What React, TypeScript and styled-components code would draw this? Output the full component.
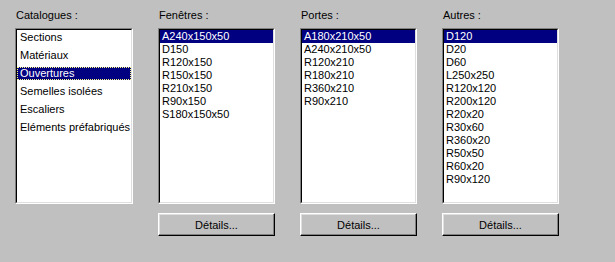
import styled, { createGlobalStyle, css } from 'styled-components';

const GlobalStyle = createGlobalStyle`
  html, body {
    margin: 0;
    padding: 0;
    background: #c0c0c0;
  }
  body {
    font-family: "Liberation Sans", Arial, sans-serif;
    font-size: 11px;
    color: #000;
  }
`;

interface Catalogue {
  title: string;
  items: string[];
  selected: number;
  tall?: boolean;
  focused?: boolean;
  button?: boolean;
}

const catalogues: Catalogue[] = [
  {
    title: 'Catalogues :',
    items: ['Sections', 'Matériaux', 'Ouvertures', 'Semelles isolées', 'Escaliers', 'Eléments préfabriqués'],
    selected: 2,
    tall: true,
    focused: true,
  },
  {
    title: 'Fenêtres :',
    items: ['A240x150x50', 'D150', 'R120x150', 'R150x150', 'R210x150', 'R90x150', 'S180x150x50'],
    selected: 0,
    button: true,
  },
  {
    title: 'Portes :',
    items: ['A180x210x50', 'A240x210x50', 'R120x210', 'R180x210', 'R360x210', 'R90x210'],
    selected: 0,
    button: true,
  },
  {
    title: 'Autres :',
    items: [
      'D120', 'D20', 'D60', 'L250x250', 'R120x120', 'R200x120',
      'R20x20', 'R30x60', 'R360x20', 'R50x50', 'R60x20', 'R90x120',
    ],
    selected: 0,
    button: true,
  },
];

const Dialog = styled.div`
  display: grid;
  grid-template-columns: 118px 117px 117px 117px;
  column-gap: 25px;
  padding: 9px 0 0 15px;
  height: 262px;
  box-sizing: border-box;
`;

const Column = styled.div`
  display: flex;
  flex-direction: column;
`;

const Caption = styled.div`
  height: 13px;
  line-height: 13px;
  margin: 0 0 6px 1px;
  white-space: nowrap;
`;

const ListBox = styled.div`
  height: 176px;
  box-sizing: border-box;
  background: #fff;
  border-style: solid;
  border-width: 1px;
  border-color: #808080 #fff #fff #808080;
  overflow: hidden;
`;

const ListInner = styled.div<{ $tall?: boolean }>`
  height: 100%;
  box-sizing: border-box;
  border-style: solid;
  border-width: 1px;
  border-color: #000 #dfdfdf #dfdfdf #000;
  padding-top: ${({ $tall }) => ($tall ? '1px' : '0')};
  display: flex;
  flex-direction: column;
  gap: ${({ $tall }) => ($tall ? '5px' : '0')};
`;

const Item = styled.div<{ $selected?: boolean; $focused?: boolean; $tall?: boolean }>`
  height: 13px;
  line-height: 13px;
  padding-left: ${({ $tall }) => ($tall ? '3px' : '2px')};
  white-space: nowrap;
  box-sizing: border-box;
  ${({ $selected }) =>
    $selected &&
    css`
      background: #000080;
      color: #fff;
    `}
  ${({ $focused }) =>
    $focused &&
    css`
      outline: 1px dotted #ffff7f;
      outline-offset: -1px;
    `}
`;

const Button = styled.button`
  margin-top: 9px;
  height: 23px;
  width: 100%;
  box-sizing: border-box;
  padding: 0;
  font: inherit;
  color: #000;
  background: #c0c0c0;
  border-style: solid;
  border-width: 1px;
  border-color: #fff #000 #000 #fff;
  box-shadow: inset -1px -1px 0 #808080, inset 1px 1px 0 #dfdfdf;
  cursor: default;
`;

function App() {
  return (
    <>
      <GlobalStyle />
      <Dialog>
        {catalogues.map(cat => (
          <Column key={cat.title}>
            <Caption>{cat.title}</Caption>
            <ListBox>
              <ListInner $tall={cat.tall}>
                {cat.items.map((item, i) => (
                  <Item
                    key={item}
                    $tall={cat.tall}
                    $selected={i === cat.selected}
                    $focused={cat.focused && i === cat.selected}
                  >
                    {item}
                  </Item>
                ))}
              </ListInner>
            </ListBox>
            {cat.button && <Button>Détails...</Button>}
          </Column>
        ))}
      </Dialog>
    </>
  );
}

export default App;
